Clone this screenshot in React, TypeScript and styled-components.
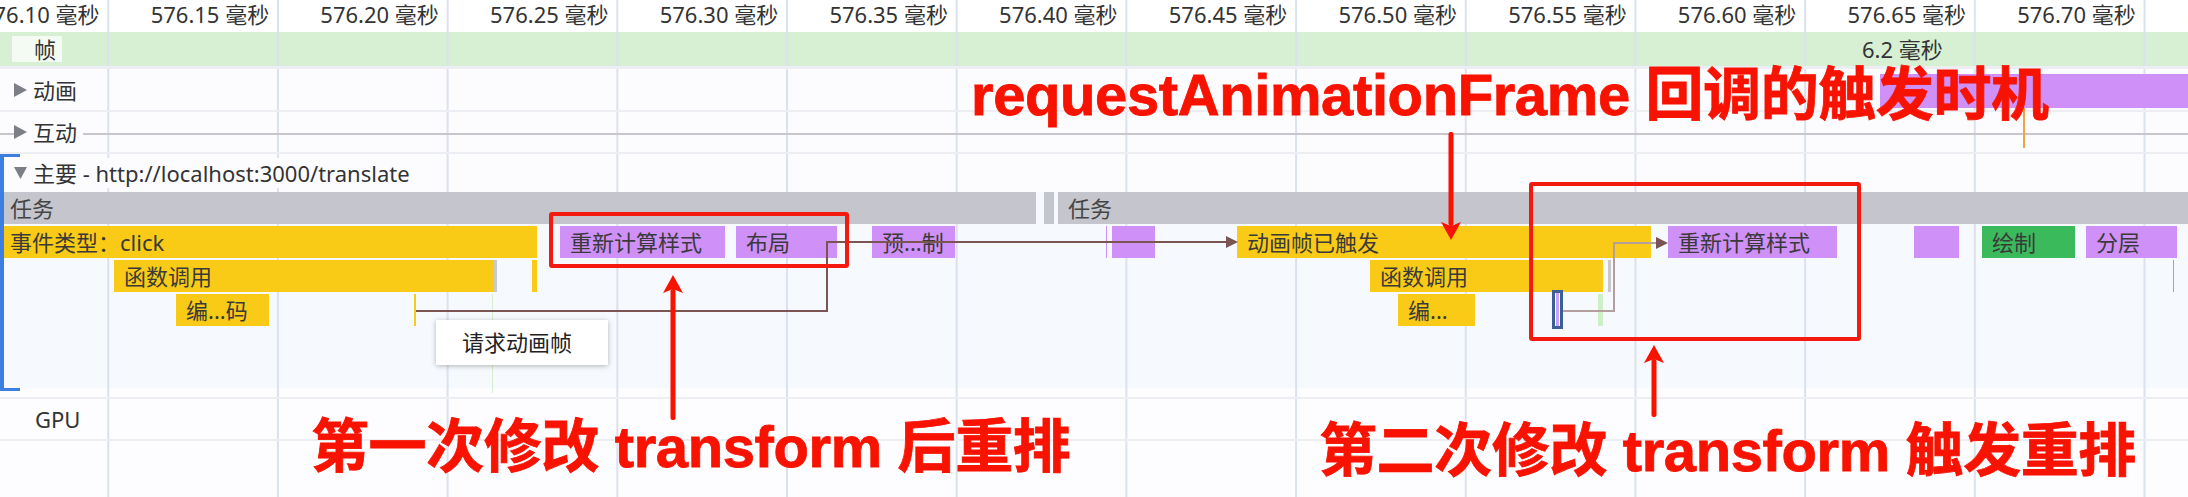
import React from 'react';
import styled, { createGlobalStyle, css } from 'styled-components';

// time grid: one division = 0.05 ms
const STEP = 169.7;
const FIRST_LINE = 108.5;

const GlobalStyle = createGlobalStyle`
  html, body {
    margin: 0;
    padding: 0;
  }
  body {
    width: 2188px;
    height: 497px;
    overflow: hidden;
    background: #fdfcff;
    font-family: "Noto Sans", "Noto Sans CJK SC", sans-serif;
    color: #333;
  }
`;

const gridBg = (color: string) => css`
  background-color: ${color};
  background-image: linear-gradient(to right, transparent calc(100% - 1.5px), #dbe2ee calc(100% - 1.5px));
  background-size: ${STEP}px 100%;
  background-repeat: repeat-x;
  background-position: ${FIRST_LINE - STEP + 0.75}px 0;
`;

const Panel = styled.div`
  position: relative;
  width: 2188px;
  height: 497px;
  overflow: hidden;
  display: flex;
  flex-direction: column;
  ${gridBg('#fdfcff')}
`;

/* ---------- ruler ---------- */

const Ruler = styled.div`
  height: 32px;
  flex: none;
  display: flex;
  overflow: hidden;
  ${gridBg('#ffffff')}
`;

const RulerTrack = styled.div`
  display: flex;
  flex: none;
  margin-left: ${FIRST_LINE - STEP}px;
`;

const Tick = styled.div`
  flex: none;
  width: ${STEP}px;
  box-sizing: border-box;
  padding-right: 9px;
  text-align: right;
  font-size: 22px;
  line-height: 28px;
  white-space: nowrap;
  color: #333;
`;

/* ---------- frames ---------- */

const FrameRow = styled.div`
  position: relative;
  height: 34px;
  flex: none;
  ${gridBg('#d7efd3')}
`;

const FrameTag = styled.div`
  margin: 4px 0 0 12px;
  width: 50px;
  height: 26px;
  box-sizing: border-box;
  padding-left: 22px;
  background: rgba(255, 255, 255, 0.72);
  font-size: 22px;
  line-height: 26px;
`;

const FrameDuration = styled.div<{ $left: number }>`
  position: absolute;
  left: ${(p) => p.$left}px;
  top: 0;
  font-size: 22px;
  line-height: 34px;
  white-space: nowrap;
`;

const Divider = styled.div<{ $h: number }>`
  height: ${(p) => p.$h}px;
  flex: none;
  background: #eceef4;
`;

/* ---------- collapsible tracks ---------- */

const TrackRow = styled.div<{ $h: number }>`
  position: relative;
  height: ${(p) => p.$h}px;
  flex: none;
  display: flex;
  align-items: center;
  border-bottom: 2px solid #eceef3;
  ${gridBg('#fcfcff')}
`;

const TrackLabel = styled.div`
  position: relative;
  z-index: 1;
  display: flex;
  align-items: center;
  gap: 6px;
  margin-left: 14px;
  padding-right: 6px;
  background: #fcfcff;
  font-size: 22px;
  line-height: 30px;
  white-space: nowrap;
`;

const Caret = ({ down }: { down?: boolean }) => (
  <svg width="13" height="14" viewBox="0 0 13 14">
    {down ? <polygon points="0,1 13,1 6.5,13" fill="#7d7f86" /> : <polygon points="0,0 13,7 0,14" fill="#7d7f86" />}
  </svg>
);

const InteractionLine = styled.div`
  position: absolute;
  left: 0;
  right: 0;
  top: 21px;
  height: 2px;
  background: #c6c6cc;
`;

const TrackBlock = styled.div<{ $left: number; $top: number; $h: number; $color: string; $w?: number }>`
  position: absolute;
  left: ${(p) => p.$left}px;
  top: ${(p) => p.$top}px;
  height: ${(p) => p.$h}px;
  width: ${(p) => (p.$w ? `${p.$w}px` : 'auto')};
  right: ${(p) => (p.$w ? 'auto' : '0')};
  background: ${(p) => p.$color};
`;

/* ---------- main thread ---------- */

const MainSection = styled.div`
  position: relative;
  flex: none;
  display: flex;
  flex-direction: column;

  &::before {
    content: '';
    position: absolute;
    z-index: 3;
    left: 0;
    top: 0;
    bottom: -3px;
    width: 20px;
    box-sizing: border-box;
    border: solid #3d7fe0;
    border-width: 3px 0 3px 4px;
  }
`;

const MainHeader = styled.div`
  height: 38px;
  display: flex;
  align-items: center;
  ${gridBg('#fcfcff')}
`;

const TaskRow = styled.div`
  position: relative;
  height: 32px;
  ${gridBg('#f6f9fd')}
`;

const TaskBlock = styled.div<{ $left: number; $width: number }>`
  position: absolute;
  top: 0;
  left: ${(p) => p.$left}px;
  width: ${(p) => p.$width}px;
  height: 32px;
  box-sizing: border-box;
  padding-left: 10px;
  background: #c4c5cd;
  font-size: 22px;
  line-height: 32px;
  color: #444;
  white-space: nowrap;
  overflow: hidden;
`;

const FlameArea = styled.div`
  position: relative;
  height: 164px;
  ${gridBg('#f6f9fd')}
`;

const Bar = styled.div<{ $left: number; $width: number; $top: number; $color: string; $h?: number }>`
  position: absolute;
  left: ${(p) => p.$left}px;
  width: ${(p) => p.$width}px;
  top: ${(p) => p.$top}px;
  height: ${(p) => p.$h ?? 32}px;
  background: ${(p) => p.$color};
  overflow: hidden;
`;

const BarLabel = styled.span`
  display: block;
  padding-left: 10px;
  font-size: 22px;
  line-height: 32px;
  color: #3a3a3a;
  white-space: nowrap;
`;

const SelectedMark = styled.div<{ $left: number }>`
  position: absolute;
  left: ${(p) => p.$left}px;
  top: 66px;
  width: 11px;
  height: 39px;
  box-sizing: border-box;
  border: 3px solid #3b5f96;
  background: linear-gradient(to right, #fff 0 1px, #c6a4f6 1px 4px, #fff 4px);
`;

const Tooltip = styled.div`
  position: absolute;
  z-index: 2;
  left: 436px;
  top: 96px;
  width: 172px;
  height: 45px;
  box-sizing: border-box;
  padding-left: 26px;
  background: #fff;
  box-shadow: 0 1px 5px rgba(0, 0, 0, 0.28);
  font-size: 22px;
  line-height: 45px;
  color: #222;
  white-space: nowrap;
`;

const Links = styled.svg`
  position: absolute;
  z-index: 1;
  left: 0;
  top: 0;
  pointer-events: none;
`;

const GpuRow = styled.div`
  height: 40px;
  flex: none;
  margin-top: 9px;
  border-top: 2px solid #eceef3;
  border-bottom: 2px solid #eceef3;
  padding-left: 35px;
  font-size: 22px;
  line-height: 40px;
`;

/* ---------- red annotations ---------- */

const RED = '#f81200';

const Callout = styled.div<{ $left: number; $top: number }>`
  position: absolute;
  z-index: 5;
  left: ${(p) => p.$left}px;
  top: ${(p) => p.$top}px;
  font-family: "Liberation Sans", "Noto Sans CJK SC", sans-serif;
  font-weight: 700;
  font-size: 58px;
  line-height: 58px;
  letter-spacing: -0.4px;
  color: ${RED};
  white-space: nowrap;
  -webkit-text-stroke: 0.8px ${RED};
`;

const RedBox = styled.div<{ $left: number; $top: number; $w: number; $h: number }>`
  position: absolute;
  z-index: 5;
  left: ${(p) => p.$left}px;
  top: ${(p) => p.$top}px;
  width: ${(p) => p.$w}px;
  height: ${(p) => p.$h}px;
  box-sizing: border-box;
  border: 4px solid #f51a10;
  border-radius: 3px;
`;

const ArrowSvg = styled.svg<{ $left: number; $top: number }>`
  position: absolute;
  z-index: 5;
  left: ${(p) => p.$left}px;
  top: ${(p) => p.$top}px;
`;

const RedArrow = ({ x, from, to }: { x: number; from: number; to: number }) => {
  const h = Math.abs(from - to);
  const up = to < from;
  const head = 18;
  return (
    <ArrowSvg $left={x - 11} $top={Math.min(from, to)} width={22} height={h} viewBox={`0 0 22 ${h}`}>
      <g fill={RED} transform={up ? undefined : `rotate(180 11 ${h / 2})`}>
        <rect x={8.5} y={head - 4} width={5} height={h - head + 4} rx={2} />
        <polygon points={`11,0 21,${head} 11,${head - 4} 1,${head}`} />
      </g>
    </ArrowSvg>
  );
};

/* ---------- data ---------- */

const YELLOW = '#f9cb17';
const PURPLE = '#cf90f8';
const GREEN = '#3bba5c';

const ticks = ['576.10', '576.15', '576.20', '576.25', '576.30', '576.35', '576.40', '576.45', '576.50', '576.55', '576.60', '576.65', '576.70', '576.75'];

type Ev = { x: number; w: number; row: number; color: string; label?: string; h?: number };

const events: Ev[] = [
  { x: 0, w: 537, row: 0, color: YELLOW, label: '事件类型：click' },
  { x: 560, w: 165, row: 0, color: PURPLE, label: '重新计算样式' },
  { x: 736, w: 101, row: 0, color: PURPLE, label: '布局' },
  { x: 872, w: 83, row: 0, color: PURPLE, label: '预...制' },
  { x: 1106, w: 1, row: 0, color: PURPLE },
  { x: 1112, w: 43, row: 0, color: PURPLE },
  { x: 1237, w: 414, row: 0, color: YELLOW, label: '动画帧已触发' },
  { x: 1668, w: 169, row: 0, color: PURPLE, label: '重新计算样式' },
  { x: 1914, w: 45, row: 0, color: PURPLE },
  { x: 1982, w: 93, row: 0, color: GREEN, label: '绘制' },
  { x: 2086, w: 91, row: 0, color: PURPLE, label: '分层' },
  { x: 114, w: 380, row: 1, color: YELLOW, label: '函数调用' },
  { x: 494, w: 3, row: 1, color: '#c8c8cd' },
  { x: 532, w: 5, row: 1, color: YELLOW },
  { x: 1370, w: 233, row: 1, color: YELLOW, label: '函数调用' },
  { x: 1608, w: 3, row: 1, color: '#c8c8cd' },
  { x: 2173, w: 1, row: 1, color: '#6cc987' },
  { x: 176, w: 93, row: 2, color: YELLOW, label: '编...码' },
  { x: 414, w: 1.5, row: 2, color: YELLOW },
  { x: 492, w: 1, row: 2, color: '#d6f0cf', h: 99 },
  { x: 1398, w: 77, row: 2, color: YELLOW, label: '编...' },
  { x: 1598, w: 5, row: 2, color: '#cdf0c6' },
];

const rowTop = [2, 36, 70];

export default function App() {
  return (
    <>
      <GlobalStyle />
      <Panel>
        <Ruler>
          <RulerTrack>
            {ticks.map((t) => (
              <Tick key={t}>{t} 毫秒</Tick>
            ))}
          </RulerTrack>
        </Ruler>

        <FrameRow>
          <FrameTag>帧</FrameTag>
          <FrameDuration $left={1862}>6.2 毫秒</FrameDuration>
        </FrameRow>
        <Divider $h={3} />

        <TrackRow $h={41}>
          <TrackLabel>
            <Caret />
            动画
          </TrackLabel>
          <TrackBlock $left={1880} $top={5} $h={34} $color={PURPLE} />
        </TrackRow>

        <TrackRow $h={40}>
          <InteractionLine />
          <TrackLabel>
            <Caret />
            互动
          </TrackLabel>
          <TrackBlock $left={2023} $top={-4} $h={40} $w={2} $color="#f2a444" />
        </TrackRow>

        <MainSection>
          <MainHeader>
            <TrackLabel>
              <Caret down />
              主要 - http://localhost:3000/translate
            </TrackLabel>
          </MainHeader>
          <TaskRow>
            <TaskBlock $left={0} $width={1036}>任务</TaskBlock>
            <TaskBlock $left={1044} $width={9} />
            <TaskBlock $left={1058} $width={1130}>任务</TaskBlock>
          </TaskRow>
          <FlameArea>
            {events.map((e, i) => (
              <Bar key={i} $left={e.x} $width={e.w} $top={rowTop[e.row]} $h={e.h} $color={e.color}>
                {e.label && <BarLabel>{e.label}</BarLabel>}
              </Bar>
            ))}
            <SelectedMark $left={1552} />
            <Links width={2188} height={164} viewBox="0 0 2188 164">
              <path d="M416 87 H827 V18 H1227" fill="none" stroke="#7a5552" strokeWidth={2} />
              <polygon points="1226,12 1238,18 1226,24" fill="#7a5552" />
              <path d="M1563 87 H1614 V19 H1657" fill="none" stroke="#b49e9e" strokeWidth={2} />
              <polygon points="1656,13 1668,19 1656,25" fill="#7b5353" />
            </Links>
            <Tooltip>请求动画帧</Tooltip>
          </FlameArea>
        </MainSection>

        <GpuRow>GPU</GpuRow>

        <Callout $left={971} $top={66}>requestAnimationFrame 回调的触发时机</Callout>
        <Callout $left={311} $top={418}>第一次修改 transform 后重排</Callout>
        <Callout $left={1319} $top={422}>第二次修改 transform 触发重排</Callout>

        <RedBox $left={549} $top={212} $w={300} $h={56} />
        <RedBox $left={1529} $top={182} $w={332} $h={159} />

        <RedArrow x={673} from={420} to={275} />
        <RedArrow x={1654} from={417} to={345} />
        <RedArrow x={1451} from={132} to={240} />
      </Panel>
    </>
  );
}
